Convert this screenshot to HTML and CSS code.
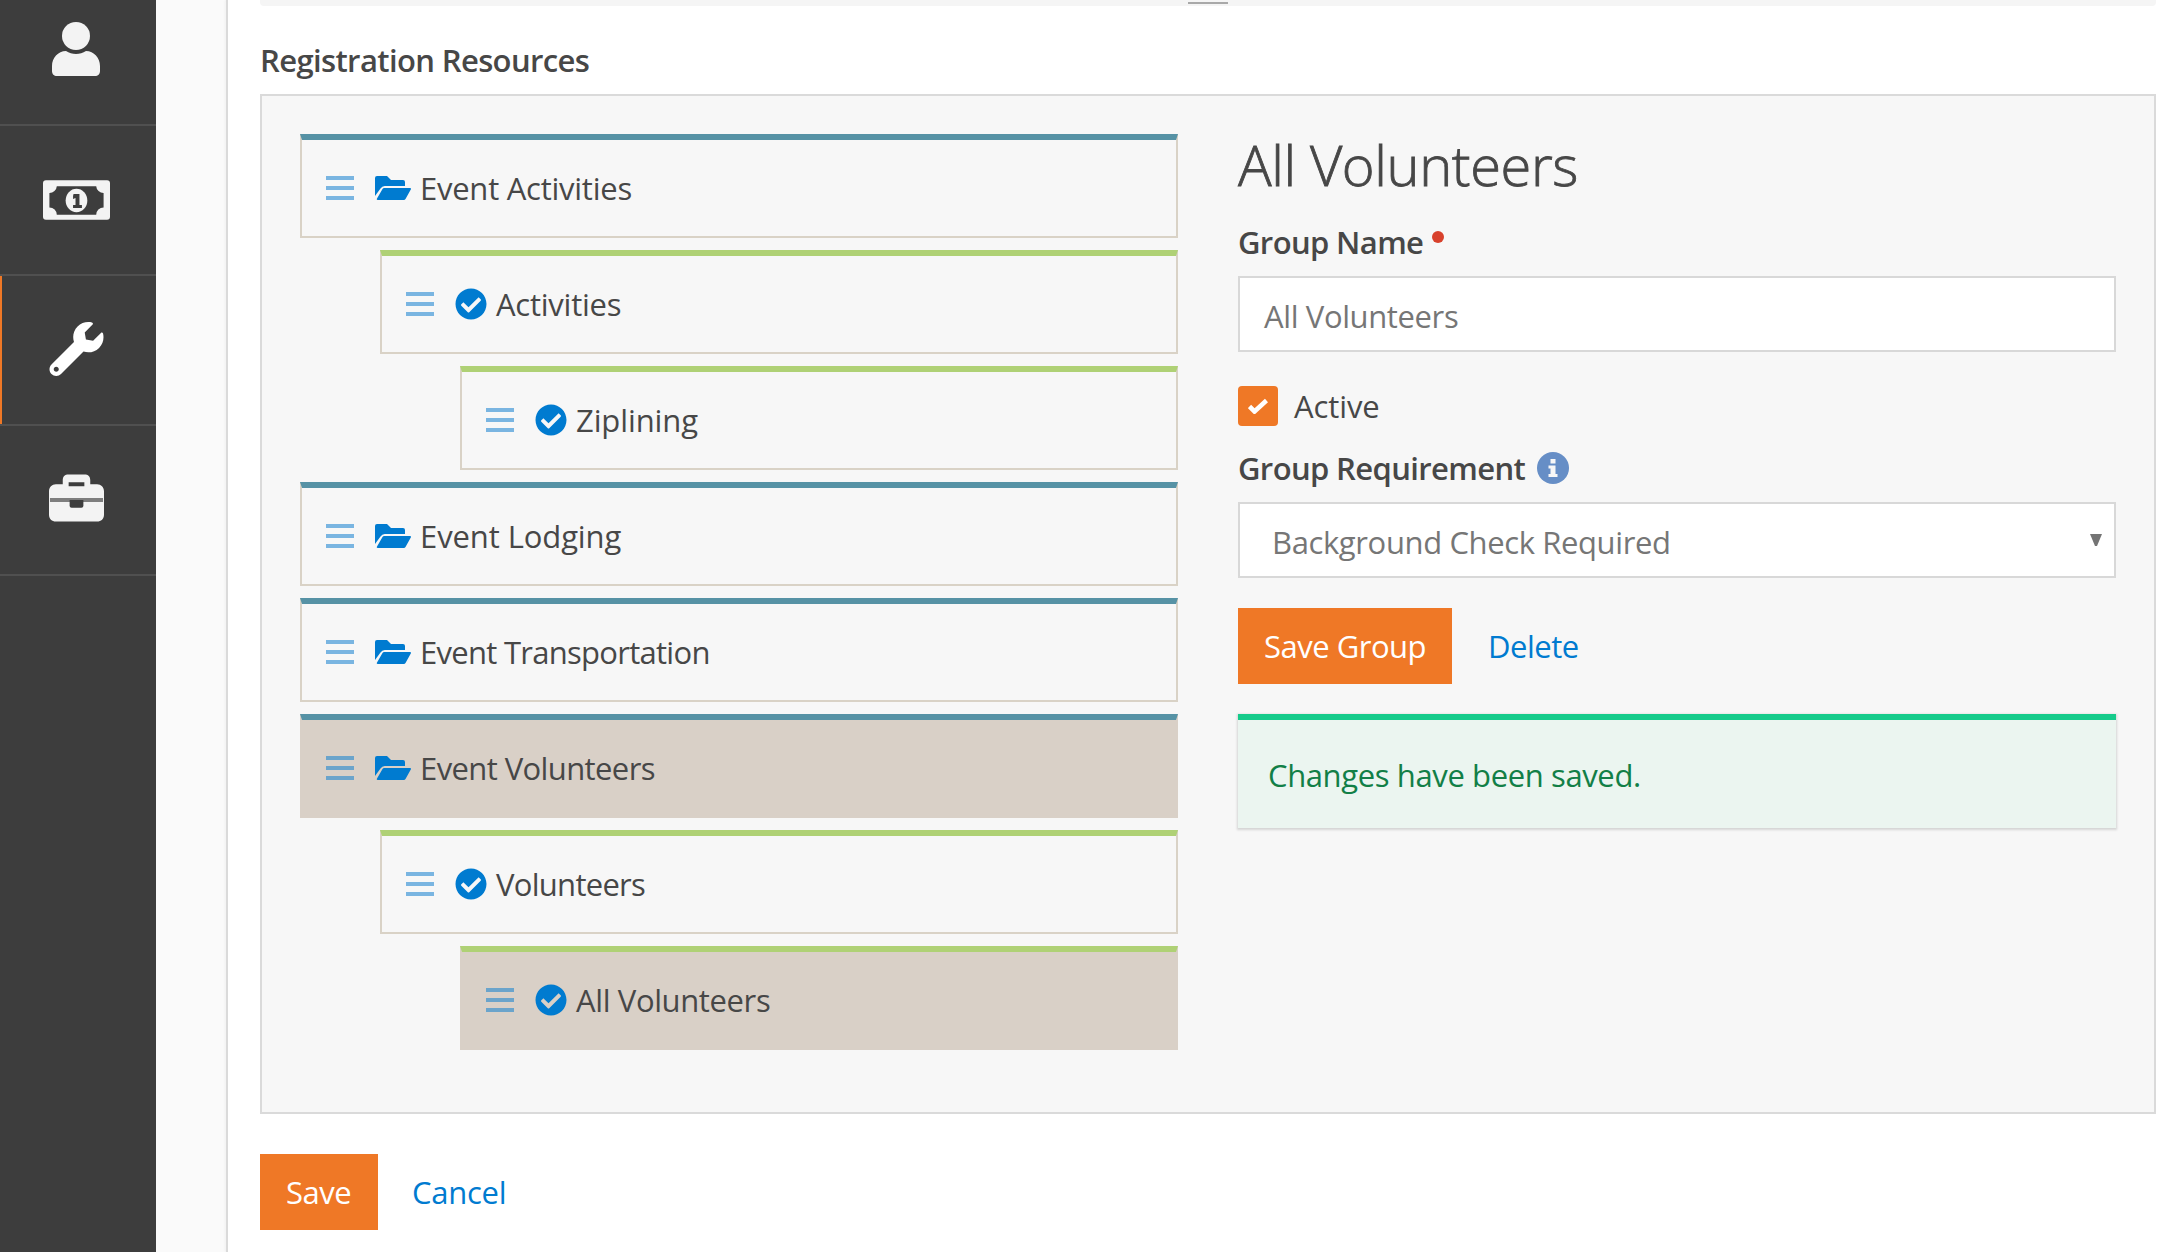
FILE: index.html
```html
<!DOCTYPE html>
<html lang="en">
<head>
<meta charset="utf-8">
<title>Registration Resources</title>
<link rel="stylesheet" href="styles.css">
</head>
<body>
<svg class="defs" aria-hidden="true">
  <symbol id="i-bars" viewBox="0 0 28 24"><path d="M0 0h28v4H0zM0 10h28v4H0zM0 20h28v4H0z"/></symbol>
  <symbol id="i-folder" viewBox="0 0 36 24"><path d="M0 20V2a2 2 0 0 1 2-2h10l4 4h12a2 2 0 0 1 2 2v4H10a5 5 0 0 0-4.500 2.500z"/><path d="M2 22.500l5.500-9.500a2 2 0 0 1 2-1H35a1 1 0 0 1 .8 1.500l-5.300 9.500a2 2 0 0 1-1.800 1H2.800a1 1 0 0 1-.8-1.500z"/></symbol>
  <symbol id="i-check-circle" viewBox="0 0 512 512"><path d="M504 256c0 137-111 248-248 248S8 393 8 256 119 8 256 8s248 111 248 248zM227.300 387.300l184-184c6.200-6.200 6.200-16.400 0-22.600l-22.600-22.600c-6.200-6.200-16.400-6.200-22.600 0L216 308.100l-70.100-70.100c-6.200-6.200-16.400-6.200-22.600 0l-22.600 22.600c-6.200 6.200-6.200 16.400 0 22.600l104 104c6.200 6.200 16.400 6.200 22.600.1z"/></symbol>
</svg>
<div class="app">
  <nav class="sidebar">
    <a class="nav-item"><svg class="nav-user" viewBox="0 0 48 54"><circle cx="24" cy="14" r="14"/><path d="M14 29c6 4 14 4 20 0 8 0 14 7 14 15v5c0 3-2 5-5 5H5c-3 0-5-2-5-5v-5c0-8 6-15 14-15z"/></svg></a>
    <a class="nav-item"><svg class="nav-money" viewBox="0 0 68 40"><path fill-rule="evenodd" d="M3 0h62a3 3 0 0 1 3 3v34a3 3 0 0 1-3 3H3a3 3 0 0 1-3-3V3a3 3 0 0 1 3-3zM14 6a7.500 7.500 0 0 1-7.500 7v14.500A7.500 7.500 0 0 1 14 35h40a7.500 7.500 0 0 1 7.500-7.500V13A7.500 7.500 0 0 1 54 6z"/><ellipse cx="34" cy="20.500" rx="11" ry="12"/><path class="cut" d="M31 14h6v11h2.500v3h-9v-3H33v-7l-2.500 1v-3z"/></svg></a>
    <a class="nav-item active"><svg class="nav-wrench" viewBox="0 0 512 512"><path d="M507.730 109.100c-2.240-9.030-13.540-12.090-20.120-5.510l-74.360 74.360-67.880-11.310-11.310-67.880 74.360-74.360c6.620-6.620 3.430-17.900-5.660-20.160-47.380-11.740-99.550.91-136.580 37.930-39.640 39.640-50.550 97.100-34.050 147.200L18.740 402.760c-24.990 24.990-24.990 65.510 0 90.500 24.990 24.990 65.510 24.990 90.500 0l213.210-213.210c50.120 16.710 107.470 5.680 147.370-34.220 37.070-37.070 49.700-89.320 37.910-136.730zM64 472c-13.250 0-24-10.750-24-24 0-13.260 10.750-24 24-24s24 10.740 24 24c0 13.250-10.750 24-24 24z"/></svg></a>
    <a class="nav-item tools"><svg class="nav-toolbox" viewBox="0 0 56 48"><path fill-rule="evenodd" d="M14 10V6c0-4 2-6 6-6h16c4 0 6 2 6 6v4h7c4 0 7 3 7 7v24c0 4-3 7-7 7H7c-4 0-7-3-7-7V17c0-4 3-7 7-7zM20 8v4h16V8z"/><path class="seam" d="M1 24h54v4H1z"/><path class="cut" d="M21 26h14v6a2 2 0 0 1-2 2H23a2 2 0 0 1-2-2z"/></svg></a>
  </nav>
  <main class="page">
    <div class="upper-panel"><span class="resize-grip"></span></div>
    <h2 class="section-title">Registration Resources</h2>
    <section class="panel">
      <ul class="tree">
        <li class="node folder"><svg class="bars"><use href="#i-bars"/></svg><svg class="fold"><use href="#i-folder"/></svg><span class="loose">Event Activities</span></li>
        <li class="node group l2"><svg class="bars"><use href="#i-bars"/></svg><svg class="chk"><use href="#i-check-circle"/></svg><span class="loose">Activities</span></li>
        <li class="node group l3"><svg class="bars"><use href="#i-bars"/></svg><svg class="chk"><use href="#i-check-circle"/></svg><span class="looser">Ziplining</span></li>
        <li class="node folder"><svg class="bars"><use href="#i-bars"/></svg><svg class="fold"><use href="#i-folder"/></svg><span class="looser">Event Lodging</span></li>
        <li class="node folder"><svg class="bars"><use href="#i-bars"/></svg><svg class="fold"><use href="#i-folder"/></svg><span class="tighter">Event Transportation</span></li>
        <li class="node folder selected"><svg class="bars"><use href="#i-bars"/></svg><svg class="fold"><use href="#i-folder"/></svg><span class="tight">Event Volunteers</span></li>
        <li class="node group l2"><svg class="bars"><use href="#i-bars"/></svg><svg class="chk"><use href="#i-check-circle"/></svg><span class="tighter">Volunteers</span></li>
        <li class="node group l3 selected"><svg class="bars"><use href="#i-bars"/></svg><svg class="chk"><use href="#i-check-circle"/></svg><span class="snug">All Volunteers</span></li>
      </ul>
      <div class="detail">
        <h1 class="heading">All Volunteers</h1>
        <div class="label name-label"><span>Group Name</span><i class="required"></i></div>
        <div class="field"><span class="snug">All Volunteers</span></div>
        <div class="check-row"><span class="checkbox"><svg viewBox="0 0 20 16"><path d="M1.500 8.500l5 5L18.500 2.500" fill="none" stroke="#fff" stroke-width="4.600"/></svg></span><span class="looser">Active</span></div>
        <div class="label req-label"><span>Group Requirement</span><svg class="info" viewBox="0 0 32 32"><circle cx="16" cy="16" r="16"/><path fill="#f7f7f7" d="M13.500 7h5v4.500h-5zM11.500 13.500h7V22h2v3h-9v-3h2v-5.500h-2z"/></svg></div>
        <div class="field select"><span class="snug">Background Check Required</span><svg class="arrow" viewBox="0 0 12 12"><path d="M0 0h12L7 12H5z"/></svg></div>
        <div class="actions"><a class="btn btn-group"><span>Save Group</span></a><a class="link"><span>Delete</span></a></div>
        <div class="alert"><span class="snug">Changes have been saved.</span></div>
      </div>
    </section>
    <div class="actions footer"><a class="btn btn-save"><span>Save</span></a><a class="link"><span class="loose">Cancel</span></a></div>
  </main>
</div>
</body>
</html>
```
FILE: styles.css
```css
* { box-sizing: border-box; }
body {
  margin: 0;
  background: #fafafa;
  color: #474747;
  font-family: "Open Sans", "Noto Sans", sans-serif;
  font-size: 31px;
  line-height: 44px;
  letter-spacing: -0.5px;
  white-space: nowrap;
}
.defs { position: absolute; width: 0; height: 0; }
svg { display: block; flex: none; }
.app { display: flex; height: 1252px; overflow: hidden; }

.tighter { letter-spacing: -0.72px; }
.tight { letter-spacing: -0.6px; }
.snug { letter-spacing: -0.38px; }
.loose { letter-spacing: -0.25px; }
.looser { letter-spacing: -0.1px; }

.sidebar { width: 156px; background: #3d3d3d; flex: none; }
.nav-item {
  display: flex;
  align-items: center;
  justify-content: center;
  height: 150px;
  border-bottom: 2px solid #505050;
  fill: #f3f3f3;
  padding-right: 4px;
}
.nav-item:first-child { height: 126px; padding-bottom: 27px; }
.nav-item.active { box-shadow: inset 2px 0 #ef7826; fill: #fff; padding-bottom: 2px; }
.nav-item.tools { padding-bottom: 4px; }
.nav-user { width: 48px; height: 54px; }
.nav-money { width: 67px; height: 40px; }
.nav-wrench { width: 55px; height: 54px; }
.nav-toolbox { width: 55px; height: 48px; }
.cut { fill: #3d3d3d; }
.seam { fill: #7e7e7e; }

.page {
  flex: 1;
  margin-left: 72px;
  padding-left: 32px;
  background: #fff;
  box-shadow: -1px 0 0 1px #dadada, -3px 0 2px #f0f0f0;
}
.upper-panel {
  display: flex;
  justify-content: center;
  width: 1896px;
  height: 6px;
  padding-top: 2px;
  background: #f5f5f5;
  border-radius: 0 0 4px 4px;
}
.resize-grip { width: 40px; height: 2px; background: #a9a9a9; }
.section-title { margin: 32px 0 12px; font-size: 31px; line-height: 44px; font-weight: 600; letter-spacing: -0.62px; }

.panel {
  display: flex;
  gap: 60px;
  width: 1896px;
  height: 1020px;
  padding: 38px;
  border: 2px solid #dadada;
  background: #f7f7f7;
}
.tree { width: 878px; margin: 0; padding: 0; list-style: none; display: flex; flex-direction: column; gap: 12px; }
.node {
  display: flex;
  align-items: center;
  height: 104px;
  padding: 0 0 0 24px;
  border: 2px solid #d9d2c6;
  border-top: 6px solid #5692a5;
}
.group { border-top-color: #afd175; }
.l2 { margin-left: 80px; }
.l3 { margin-left: 160px; }
.selected { background: #d9d0c7; border-left-color: #d9d0c7; border-right-color: #d9d0c7; border-bottom-color: #d9d0c7; }
.bars { width: 28px; height: 24px; fill: #7ab5e1; }
.selected .bars { fill: #6ba4cb; }
.fold { width: 36px; height: 24px; margin: 0 9px 0 21px; fill: #007bd0; }
.chk { width: 32px; height: 32px; margin: 0 9px 0 21px; fill: #007bd0; }

.detail { width: 878px; }
.heading {
  margin: -2px 0 25px;
  font-size: 56px;
  line-height: 64px;
  font-weight: 300;
  letter-spacing: -0.4px;
  -webkit-text-stroke: 0.8px #474747;
}
.label { display: flex; line-height: 44px; font-weight: 600; letter-spacing: -0.62px; }
.name-label { margin: -1px 0 12px; }
.required { width: 12px; height: 12px; margin: 11px 0 0 9px; border-radius: 50%; background: #d8412c; }
.field {
  display: flex;
  align-items: center;
  height: 76px;
  padding: 4px 12px 0 24px;
  border: 2px solid #d8d8d8;
  background: #fff;
  color: #767676;
}
.check-row { display: flex; align-items: center; margin-top: 34px; height: 40px; gap: 16px; }
.checkbox { display: flex; align-items: center; justify-content: center; width: 40px; height: 40px; border-radius: 4px; background: #ef7826; }
.checkbox svg { width: 20px; height: 16px; }
.req-label { margin: 20px 0 12px; }
.info { width: 32px; height: 32px; margin: 6px 0 0 12px; fill: #668ec6; }
.select { padding-left: 32px; justify-content: space-between; }
.arrow { width: 12px; height: 12px; margin-top: -5px; fill: #747474; }
.actions { display: flex; margin-top: 30px; height: 76px; }
.btn { display: flex; align-items: center; height: 76px; padding: 0 0 0 26px; background: #ef7826; color: #fff; }
.btn-group { width: 214px; margin-right: 36px; }
.btn-save { width: 118px; margin-right: 34px; }
.link { display: flex; align-items: center; color: #007bd0; }
.alert {
  display: flex;
  align-items: center;
  height: 114px;
  margin-top: 30px;
  padding: 1px 0 0 30px;
  border-top: 6px solid #16cb8b;
  background: #ebf5f0;
  color: #127f47;
  box-shadow: 0 1px 2px 1px #d5d5d5;
}
.footer { margin-top: 40px; }
```
